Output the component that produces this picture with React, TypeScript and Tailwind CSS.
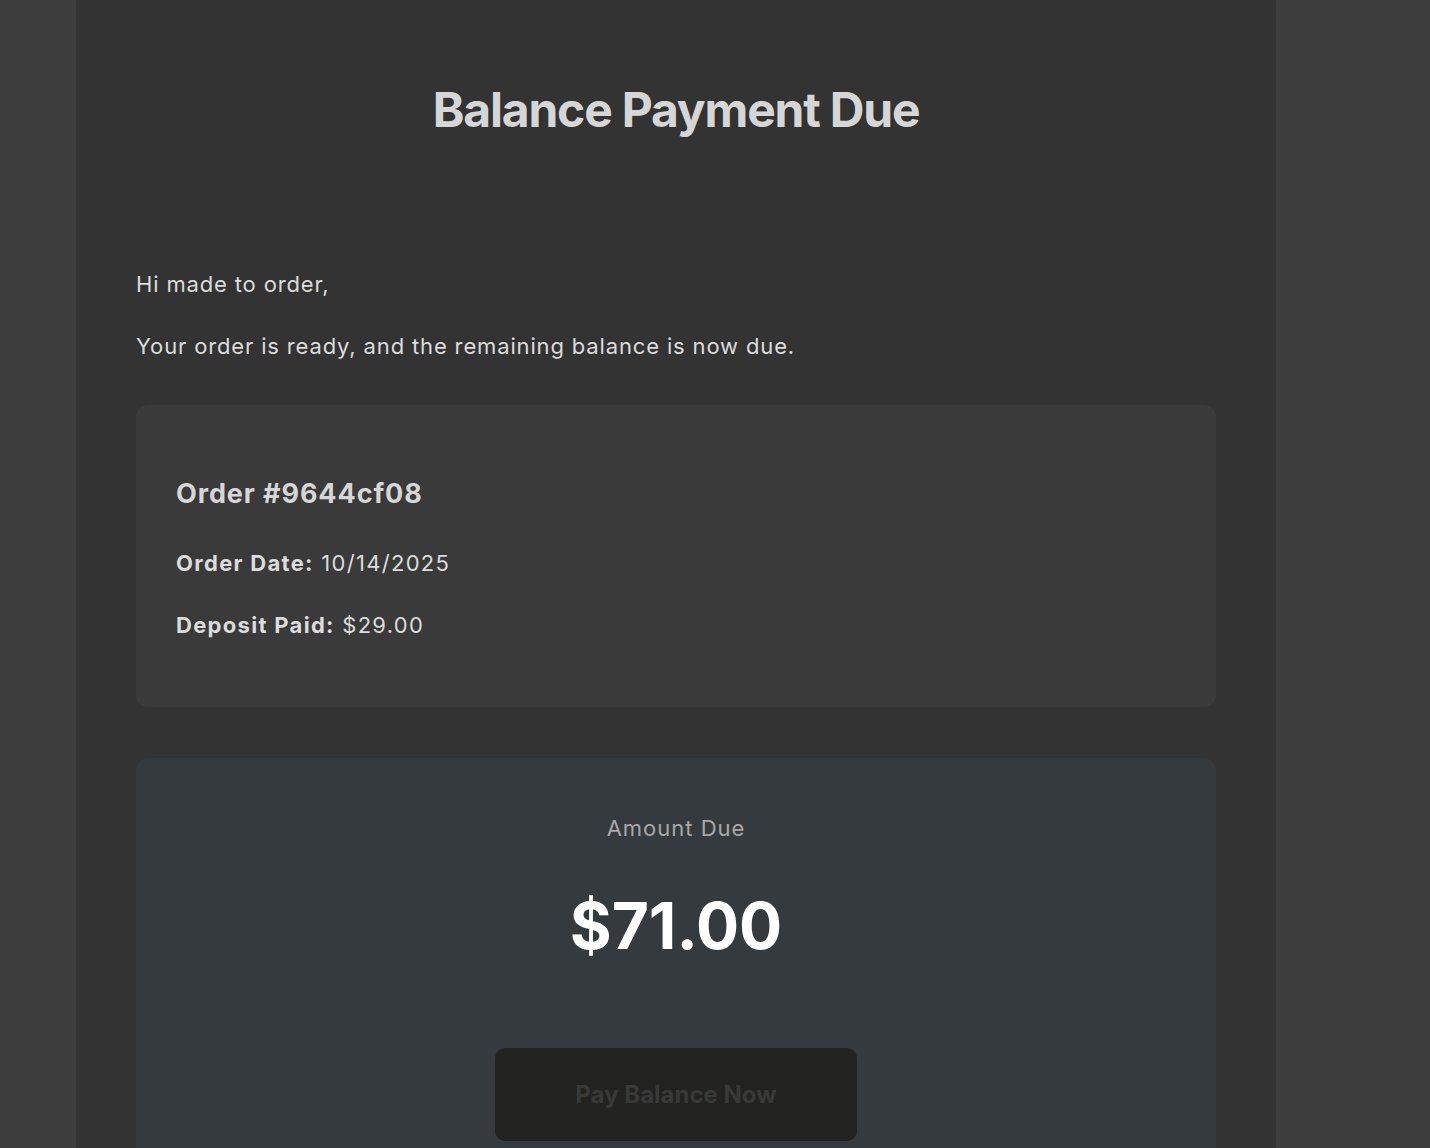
export default function App() {
  return (
    <div
      className="min-h-screen bg-[#3d3d3d]"
      style={{ fontFamily: "Inter, 'Noto Sans', sans-serif" }}
    >
      <div className="ml-[76px] w-[1200px] min-h-[1148px] bg-[#333333]">
        {/* Header */}
        <div className="pt-[81px] text-center">
          <h1 className="text-[48px] leading-[58px] font-bold tracking-[-1.2px] text-[#d6d6d6]">
            Balance Payment Due
          </h1>
        </div>

        {/* Body */}
        <div className="px-[60px] pt-[129px] text-[22px] leading-[32px] tracking-[0.85px] text-[#dcdcdc]">
          <p>Hi made to order,</p>
          <p className="mt-[30px]">
            Your order is ready, and the remaining balance is now due.
          </p>

          {/* Order details */}
          <div className="mt-[43px] rounded-xl bg-[#3a3a3a] px-10 pt-[73px] pb-[66px]">
            <h2 className="text-[27px] leading-[32px] font-bold tracking-[0.9px] text-[#d6d6d6]">
              Order #9644cf08
            </h2>
            <p className="mt-[37px] tracking-[1.3px]">
              <span className="font-bold">Order Date:</span> 10/14/2025
            </p>
            <p className="mt-[30px] tracking-[1.3px]">
              <span className="font-bold">Deposit Paid:</span> $29.00
            </p>
          </div>

          {/* Amount due */}
          <div className="mt-[51px] rounded-xl bg-[#353a3e] pt-[54px] pb-10 text-center tracking-normal">
            <p className="text-[22px] leading-[32px] tracking-[1px] text-[#a8a8a8]">
              Amount Due
            </p>
            <p className="mt-[43px] text-[64px] leading-[78px] font-bold text-white">
              $71.00
            </p>
            <div className="mt-[83px] flex justify-center">
              <button className="h-[93px] w-[362px] rounded-[10px] bg-[#222220] text-[24px] font-bold text-[#393939]">
                Pay Balance Now
              </button>
            </div>
          </div>
        </div>
      </div>
    </div>
  );
}
